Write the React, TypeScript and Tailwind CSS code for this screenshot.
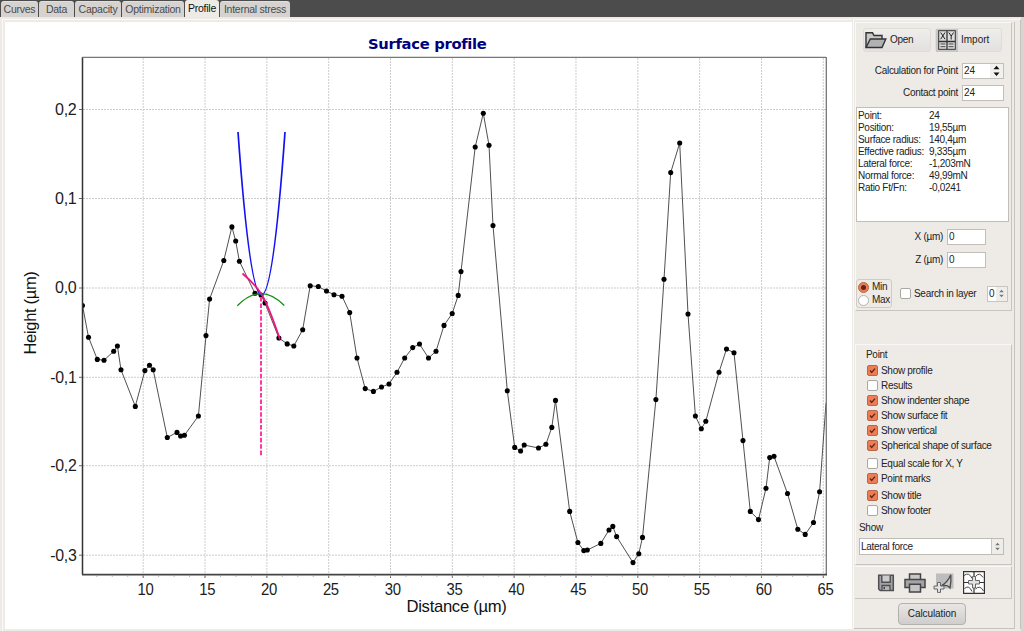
import type { ReactNode } from 'react';

const profile: [number, number][] = [
  [82.5, 305.5], [88.5, 337.2], [97.3, 359.4], [104, 360.2], [113.7, 351.3], [117.4, 346], [121, 369.8],
  [135.3, 406.4], [144.9, 370.6], [149.5, 365.3], [153.2, 369.8], [167.3, 437.5], [177, 432.4], [180.6, 436],
  [184.4, 435.3], [198.4, 416], [206, 335.6], [209.6, 299.1], [223.8, 260.5], [231.9, 226.9], [235.7, 241],
  [239.4, 261.3], [255, 293.3], [261, 295], [265, 303], [278.9, 338], [287.2, 343.9], [293.8, 346],
  [302.7, 329.7], [310.2, 285.8], [318.3, 286.5], [326.5, 291], [334, 294.7], [342, 296.2], [349.7, 312.6],
  [357, 358], [365.2, 388.6], [373.4, 391.4], [381.5, 387], [389, 384], [397, 372.2], [404.7, 358],
  [412.7, 347.6], [419.5, 344], [428.5, 358], [436, 351.3], [444, 325.4], [452.2, 313.5], [458.2, 295.4],
  [461, 271.6], [475.2, 147], [483.3, 113.3], [489, 145.2], [493, 225.5], [507.3, 390.8], [514.7, 447.4],
  [520.6, 451], [524.2, 445], [538.5, 448], [545.9, 444.3], [551.8, 427.4], [555.5, 400.4], [569.7, 511.4],
  [577.9, 542.5], [583.8, 550.6], [587.3, 550], [600.8, 543.4], [609, 530], [612.8, 526.4], [616.6, 536.6],
  [633, 562.6], [638.8, 553.7], [642.5, 537.4], [655.9, 399.6], [664, 279.2], [670.7, 172.6], [679.7, 143],
  [688, 314], [695.4, 416], [701.3, 428.7], [705.8, 421.3], [719, 372.2], [726.5, 349], [734, 352.8],
  [743, 440.6], [750.3, 511.4], [758.5, 519.6], [766, 488.2], [769.7, 457.6], [774, 456.3], [787.5, 493.5],
  [797.8, 529.2], [805.2, 534.4], [813.5, 522.5], [819.6, 491.8], [826, 403],
];

const xTicks = [10, 15, 20, 25, 30, 35, 40, 45, 50, 55, 60, 65];
const xPos = (v: number) => 143.2 + ((v - 10) * 680.1) / 55;
const minor = Array.from({ length: 48 }, (_, i) => xPos(6.25 + i * 1.25)).filter((x) => x < 826);
const yTicks: [string, number][] = [
  ['0,2', 109.5], ['0,1', 198.5], ['0,0', 288], ['-0,1', 377.3], ['-0,2', 465.7], ['-0,3', 555.2],
];

function Chart() {
  return (
    <svg className="block h-[607px] w-[847px] shrink-0 bg-white" viewBox="5 22 847 607" fontFamily="Liberation Sans, sans-serif">
      <text x="368" y="48.5" textLength="118.5" lengthAdjust="spacingAndGlyphs" fontFamily="DejaVu Sans, sans-serif" fontWeight="700" fontSize="14.5" fill="#00007c">Surface profile</text>
      <g stroke="#cdcdcd" strokeWidth="1" strokeDasharray="2 1">
        {xTicks.map((v) => <line key={v} x1={xPos(v)} x2={xPos(v)} y1="58" y2="574" />)}
        {yTicks.map(([l, y]) => <line key={l} x1="83" x2="826" y1={y} y2={y} />)}
      </g>
      <polyline points={profile.map((p) => p.join(',')).join(' ')} fill="none" stroke="#3c3c3c" strokeWidth="0.9" />
      {profile.slice(1, -1).map(([x, y]) => <circle key={x} cx={x} cy={y} r="2.55" fill="#000" />)}
      <path d="M82.5 303a2.5 2.5 0 0 1 0 5z" fill="#000" />
      <path d="M238 132Q261.5 458 285 132" fill="none" stroke="#1212f0" strokeWidth="1.7" />
      <path d="M261 297V457" stroke="#ff38a0" strokeWidth="2" strokeDasharray="4.6 1.8" />
      <path d="M242.5 273.5Q256 285 262 295Q269 307 280 339.5" fill="none" stroke="#f0127c" strokeWidth="1.7" />
      <path d="M237.3 305.7Q261 281.5 284.3 305.5" fill="none" stroke="#149014" strokeWidth="1.3" />
      <path d="M82.5 57V574.5" stroke="#333" strokeWidth="1.5" />
      <path d="M82 57.3H826" stroke="#777" strokeWidth="1.3" />
      <path d="M826.3 57V575" stroke="#777" strokeWidth="1.3" />
      <path d="M82 574.6H827" stroke="#444" strokeWidth="1.6" />
      <g stroke="#666" strokeWidth="1">
        {xTicks.map((v) => <line key={v} x1={xPos(v)} x2={xPos(v)} y1="575" y2="578" />)}
        {minor.map((x) => <line key={x} x1={x} x2={x} y1="575" y2="576.7" stroke="#999" />)}
        {yTicks.map(([l, y]) => <line key={l} x1="79" x2="82" y1={y} y2={y} />)}
      </g>
      <g fontSize="15.6" fill="#1c1c1c">
        {xTicks.map((v) => <text key={v} x={xPos(v) + 2.2} y="594.8" textAnchor="middle" textLength="16" lengthAdjust="spacingAndGlyphs">{v}</text>)}
        {yTicks.map(([l, y]) => <text key={l} x="76.5" y={y + 5.3} textAnchor="end" textLength={l.length === 3 ? 21.4 : 26.2} lengthAdjust="spacingAndGlyphs">{l}</text>)}
      </g>
      <text x="406.5" y="612" textLength="100" lengthAdjust="spacingAndGlyphs" fontSize="16.4" fill="#111">Distance (µm)</text>
      <text transform="translate(35.5 354.5) rotate(-90)" textLength="83" lengthAdjust="spacingAndGlyphs" fontSize="16.4" fill="#111">Height (µm)</text>
    </svg>
  );
}

function Check({ on, children, className }: { on?: boolean; children: ReactNode; className?: string }) {
  return (
    <label className={`flex items-center gap-[3px] pl-[11px] ${className ?? 'h-[15px]'}`}>
      <span className={`flex h-[11px] w-[11px] shrink-0 items-center justify-center rounded-[2px] border ${on ? 'border-[#b06a50] bg-[#f07c53]' : 'border-[#aaa6a1] bg-white'}`}>
        {on && <svg className="h-[7px] w-[7px]" viewBox="0 0 7 7"><path d="M1 3.5L2.7 5.5L6 1.6" fill="none" stroke="#5b2a1a" strokeWidth="1.4" /></svg>}
      </span>
      {children}
    </label>
  );
}

function Field({ label, value, row, box, spin }: { label: string; value: string; row: string; box: string; spin?: boolean }) {
  return (
    <div className={`flex items-center justify-end ${row}`}>
      <span className="mr-[4px] pb-[1px]">{label}</span>
      <span className={`flex h-[16px] items-center justify-between border border-[#c2beb9] bg-white pl-px tracking-normal ${box}`}>
        {value}
        {spin && (
          <span className="flex h-full w-[13px] items-center justify-center bg-[#f3f1ee]">
            <svg className="h-[12px] w-[7px]" viewBox="0 0 7 12"><path d="M3.5 .8L6.5 4.2H.5zM3.5 11L6.5 7.6H.5z" fill="#111" /></svg>
          </span>
        )}
      </span>
    </div>
  );
}

function Arrows() {
  return <svg className="h-[9px] w-[5px]" viewBox="0 0 5 9"><path d="M2.5 .8L4.8 3.3H.2zM2.5 8.2L4.8 5.7H.2z" fill="#777" /></svg>;
}

const info = [
  ['Point:', '24'], ['Position:', '19,55µm'], ['Surface radius:', '140,4µm'], ['Effective radius:', '9,335µm'],
  ['Lateral force:', '-1,203mN'], ['Normal force:', '49,99mN'], ['Ratio Ft/Fn:', '-0,0241'],
];

function Sidebar() {
  return (
    <aside className="flex w-[161px] shrink-0 flex-col border-r border-b border-[#c6c2bd] pl-[1px]">
      <section className="flex h-[289px] w-[157px] shrink-0 flex-col border-t border-r border-b border-l border-t-[#f9f8f6] border-r-[#c8c4bf] border-b-[#c8c4bf] border-l-[#f9f8f6]">
        <div className="mt-[5px] flex gap-[4px] pl-[7px]">
          <button className="flex h-[24px] w-[68px] items-center rounded-[3px] border border-[#e0ddd9] bg-linear-to-b from-[#f0eeeb] to-[#e2e1e0] pl-[1px]">
            <svg className="h-[18px] w-[22px]" viewBox="0 0 22 18"><path d="M1 16.5V1.8H7.5L9 4.5H17V8" fill="#c9c9ca" stroke="#333" strokeWidth="1.4" /><path d="M1 16.5L5.3 8H20.8L17 16.5Z" fill="#b1b1b3" stroke="#333" strokeWidth="1.4" /></svg>
            <span className="ml-[3px]">Open</span>
          </button>
          <button className="flex h-[24px] w-[67px] items-center rounded-[3px] border border-[#e0ddd9] bg-linear-to-b from-[#f0eeeb] to-[#e2e1e0]">
            <span className="flex h-[23px] w-[22px] items-center justify-center bg-[#c7c7c8]">
              <svg className="h-[20px] w-[18px]" viewBox="0 0 18 20"><rect x=".7" y=".7" width="16.6" height="18.6" fill="#ddd" stroke="#333" /><path d="M9 1V19M1 11.5H17" stroke="#333" strokeWidth="1.3" /><path d="M2.7 2.5L7 9.2M7 2.5L2.7 9.2M10.8 2.5L13.2 6L15.6 2.5M13.2 6V9.5" fill="none" stroke="#222" /><path d="M2.5 14H7.5M10.5 14H15.5M2.5 16.7H7.5M10.5 16.7H15.5" stroke="#444" /></svg>
            </span>
            <span className="ml-[3px] tracking-normal">Import</span>
          </button>
        </div>
        <Field label="Calculation for Point" value="24" row="mt-[11px] pr-[7px]" box="w-[42px]" spin />
        <Field label="Contact point" value="24" row="mt-[6px] pr-[7px]" box="w-[42px]" />
        <div className="mt-[6px] h-[115px] w-[153px] shrink-0 border border-[#c1bdb8] bg-white pt-[2px] pl-[1px]">
          {info.map(([k, v]) => (
            <div key={k} className="grid h-[12px] grid-cols-[71px_1fr] leading-[12px]"><span>{k}</span><span>{v}</span></div>
          ))}
        </div>
        <Field label="X (µm)" value="0" row="mt-[7px] pr-[25px]" box="w-[39px]" />
        <Field label="Z (µm)" value="0" row="mt-[7px] pr-[25px]" box="w-[39px]" />
        <div className="mt-[11px] flex items-center">
          <div className="flex h-[29px] w-[36px] flex-col justify-center rounded-[3px] border border-[#cfcbc6] pl-[1px]">
            <label className="flex h-[13px] items-center gap-[3px]"><span className="flex h-[11px] w-[11px] items-center justify-center rounded-full border border-[#b5664a] bg-[#ee7c52]"><span className="h-[5px] w-[5px] rounded-full bg-[#5c2a1a]" /></span>Min</label>
            <label className="flex h-[13px] items-center gap-[3px]"><span className="h-[11px] w-[11px] rounded-full border border-[#b8b4af] bg-white" />Max</label>
          </div>
          <Check className="h-[13px] -ml-[3px]">Search in layer</Check>
          <span className="ml-auto mr-[3px] flex h-[16px] w-[21px] items-center border border-[#c8c4bf] bg-white pl-[1px]">0<span className="ml-auto flex h-full w-[11px] items-center justify-center bg-[#efedea]"><Arrows /></span></span>
        </div>
      </section>
      <section className="mt-[33px] flex h-[221px] w-[157px] shrink-0 flex-col border-t border-r border-b border-l border-t-[#f9f8f6] border-r-[#c8c4bf] border-b-[#c8c4bf] border-l-[#f9f8f6]">
        <div className="mt-[3px] mb-[2px] h-[13px] pl-[10px] leading-[13px]">Point</div>
        <Check on>Show profile</Check>
        <Check>Results</Check>
        <Check on>Show indenter shape</Check>
        <Check on>Show surface fit</Check>
        <Check on>Show vertical</Check>
        <Check on>Spherical shape of surface</Check>
        <Check className="mt-[3px] h-[15px]">Equal scale for X, Y</Check>
        <Check on>Point marks</Check>
        <Check on className="mt-[2px] h-[15px]">Show title</Check>
        <Check>Show footer</Check>
        <div className="mt-[3px] h-[13px] pl-[3px] leading-[13px]">Show</div>
        <div className="mt-[4px] ml-[3px] flex h-[17px] w-[145px] items-center border border-[#bfbbb6] bg-white pl-[1px]">
          Lateral force
          <span className="ml-auto flex h-full w-[12px] items-center justify-center border-l border-[#c8c4bf] bg-[#efedea]"><Arrows /></span>
        </div>
      </section>
      <section className="mt-[1px] flex h-[33px] w-[157px] shrink-0 items-center border-t border-r border-b border-t-[#f9f8f6] border-r-[#c8c4bf] border-b-[#c8c4bf] pl-[22px]">
        <svg className="h-[18px] w-[18px]" viewBox="0 0 18 18"><path d="M1.7 1.2H16.3V16.5H3.2L1.7 15Z" fill="#a3a3a5" stroke="#4f4f52" strokeWidth="1.5" /><path d="M4.8 1.5V8.3H13.2V1.5" fill="#ccc" stroke="#4f4f52" strokeWidth="1.4" /><path d="M5 16V11.5H13V16" fill="#b5b5b7" stroke="#4f4f52" strokeWidth="1.3" /><path d="M7.2 13V15.2" stroke="#333" strokeWidth="1.3" /></svg>
        <svg className="ml-[9px] h-[20px] w-[22px]" viewBox="0 0 22 20"><path d="M5.5 7V1H16.5V7" fill="#c8c8c9" stroke="#444447" strokeWidth="1.5" /><path d="M1 6.5H21V14.5H1Z" fill="#a4a4a6" stroke="#444447" strokeWidth="1.5" /><path d="M5.5 11.2H16.5V18.9H5.5Z" fill="#c4c4c6" stroke="#444447" strokeWidth="1.5" /></svg>
        <svg className="ml-[7px] h-[20px] w-[22px]" viewBox="0 0 22 20"><path d="M3 .5H20.5V15.5H3Z" fill="#bdbdbd" /><path d="M8.5 12.7Q14.5 9.5 17.8 1.8Q18.4 8 17 15Q15 11.5 8.5 12.7Z" fill="#c9c9c9" stroke="#4c4c4c" strokeWidth="1.3" /><path d="M4.5 9.5H7.5V13H11V16H7.5V19.4H4.5V16H1V13H4.5Z" fill="#e3e3e3" stroke="#666" strokeWidth="1" /></svg>
        <svg className="ml-[8px] h-[23px] w-[22px]" viewBox="0 0 22 23"><path d="M.6 .6H21.4V22.4H.6Z" fill="#fff" stroke="#333" strokeWidth="1.2" /><path d="M11 1V22M1 11.5H21" stroke="#333" strokeWidth="1.2" /><path d="M1 4.5Q6 .5 9 7.5M12.5 5.5Q16.5 .5 20 6.5M1.5 17.5Q6 13.5 9 20.5M12.5 18Q17 13.5 20.5 20" fill="none" stroke="#444" /><path d="M9.5 5.5H12.5V9.5H16.5V13H12.5V17H9.5V13H5.5V9.5H9.5Z" fill="#e2e2e2" stroke="#666" /></svg>
      </section>
      <button className="mt-[4px] ml-[43px] h-[22px] w-[68px] rounded-[4px] border border-[#b4b1ad] bg-linear-to-b from-[#e9e7e5] to-[#cfcecd] tracking-[-0.1px]">Calculation</button>
    </aside>
  );
}

const tabs: [string, string][] = [
  ['Curves', 'w-[37px]'], ['Data', 'w-[35px]'], ['Capacity', 'w-[46px]'], ['Optimization', 'w-[62px]'], ['Profile', 'w-[34px]'], ['Internal stress', 'w-[70px]'],
];

export default function App() {
  return (
    <div className="flex h-[631px] w-[1024px] flex-col overflow-hidden bg-[#eeebe7] font-['Liberation_Sans',sans-serif] text-[10px] leading-none tracking-[-0.3px] text-[#222]">
      <nav className="flex h-[17px] shrink-0 items-end gap-px bg-[#4d4c4c] pl-[1px] text-[10.5px] tracking-[-0.25px]">
        {tabs.map(([t, w]) => (
          <div key={t} className={`flex items-center justify-center rounded-t-[3px] ${w} ${t === 'Profile' ? 'h-[17px] bg-[#eeebe7] pb-[1px] text-[#111]' : 'h-[16px] border-t border-[#e2dfdc] bg-[#d5d2cf] text-[#4b4b4b]'} whitespace-nowrap`}>{t}</div>
        ))}
      </nav>
      <main className="flex min-h-0 flex-1">
        <div className="mt-[2px] ml-[2px] flex w-[849px] shrink-0 border-t border-l border-[#fbfaf9] pt-[2px] pl-[2px]"><Chart /></div>
        <div className="mt-[2px] ml-[2px] flex h-[610px] w-[168px] border-t border-r border-l border-t-[#faf9f7] border-r-[#c6c2bd] border-l-[#faf9f7] pt-[2px]"><Sidebar /></div>
        <div className="flex-1 bg-[#d8d5d1]" />
      </main>
    </div>
  );
}
